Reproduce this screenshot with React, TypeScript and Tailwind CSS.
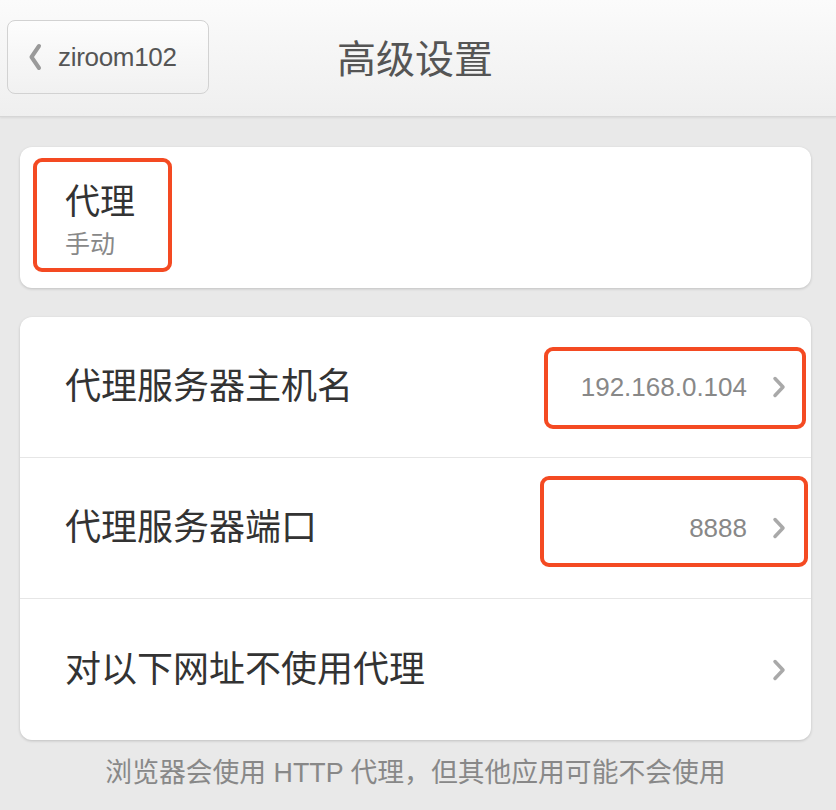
const font = { fontFamily: '"Liberation Sans", "Noto Sans CJK SC", sans-serif' };

const Chevron = ({ className = '' }: { className?: string }) => (
  <svg width="16" height="24" viewBox="0 0 16 24" className={className}>
    <path d="M4 3.5 L12 12 L4 20.5" fill="none" stroke="#a9a9a9" strokeWidth="3.5" strokeLinecap="round" strokeLinejoin="round" />
  </svg>
);

const Row = ({ label, value, mark, last }: { label: string; value?: string; mark?: string; last?: boolean }) => (
  <div className={`relative flex items-center h-[141px] pl-[45px] pr-[24px] ${last ? '' : 'border-b border-[#e6e6e6]'}`}>
    <span className="flex-1 text-[36px] text-[#333]">{label}</span>
    {value && <span className="text-[26px] text-[#888] mr-[24px]">{value}</span>}
    <Chevron />
    {mark && <div className={`absolute border-[4px] border-[#f44a22] rounded-[9px] ${mark}`} />}
  </div>
);

export default function App() {
  return (
    <div className="w-[836px] h-[810px] bg-[#e9e9e9] overflow-hidden" style={font}>
      {/* Header */}
      <div className="relative h-[117px] bg-gradient-to-b from-[#fbfbfb] to-[#efefef] border-b border-[#d6d6d6] shadow-[0_1px_2px_rgba(0,0,0,0.08)]">
        <div className="absolute left-[7px] top-[20px] w-[202px] h-[74px] rounded-[8px] border border-[#d2d2d2] bg-gradient-to-b from-[#fdfdfd] to-[#f1f1f1] flex items-center pl-[19px]">
          <svg width="16" height="28" viewBox="0 0 16 28">
            <path d="M12 3 L4.5 14 L12 25" fill="none" stroke="#9a9a9a" strokeWidth="4" strokeLinecap="round" strokeLinejoin="round" />
          </svg>
          <span className="ml-[15px] text-[26px] text-[#555] tracking-[-0.3px]">ziroom102</span>
        </div>
        <div className="absolute left-[337px] top-[36px] text-[39px] leading-[48px] text-[#555]">高级设置</div>
      </div>

      <div className="pl-[20px] pr-[25px] pt-[30px]">
        {/* Card 1 */}
        <div className="relative h-[141px] bg-white rounded-[12px] shadow-[0_1px_3px_rgba(0,0,0,0.18)]">
          <div className="absolute left-[13px] top-[11px] w-[139px] h-[114px] border-[4px] border-[#f44a22] rounded-[9px]" />
          <div className="pl-[45px] pt-[34px]">
            <div className="text-[35px] leading-[42px] text-[#333]">代理</div>
            <div className="text-[25px] leading-[30px] text-[#888] mt-[6px]">手动</div>
          </div>
        </div>

        {/* Card 2 */}
        <div className="mt-[29px] bg-white rounded-[12px] shadow-[0_1px_3px_rgba(0,0,0,0.18)]">
          <Row label="代理服务器主机名" value="192.168.0.104" mark="left-[524px] top-[30px] w-[262px] h-[82px]" />
          <Row label="代理服务器端口" value="8888" mark="left-[520px] top-[18px] w-[268px] h-[91px]" />
          <Row label="对以下网址不使用代理" last />
        </div>

        <div className="mt-[13px] text-center text-[26.8px] text-[#888]">浏览器会使用 HTTP 代理，但其他应用可能不会使用</div>
      </div>
    </div>
  );
}
